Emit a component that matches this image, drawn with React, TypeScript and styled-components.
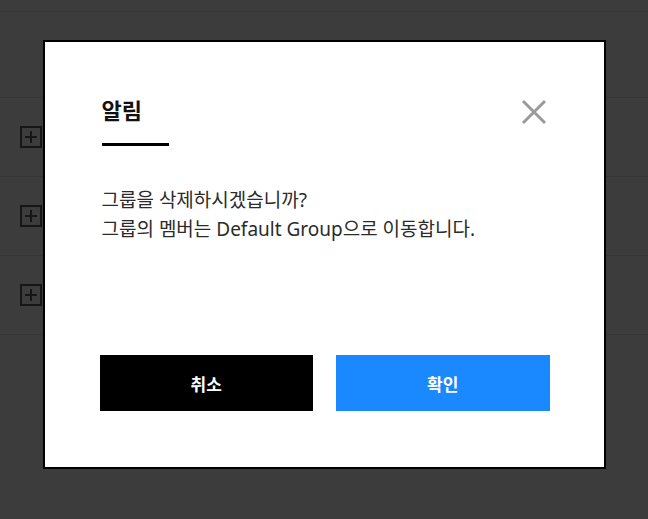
import * as React from 'react';
import styled, { createGlobalStyle } from 'styled-components';

const GlobalStyle = createGlobalStyle`
  html, body {
    margin: 0;
    padding: 0;
    background: #3c3c3c;
    font-family: 'Noto Sans', 'Noto Sans CJK KR', sans-serif;
  }
`;

const Page = styled.div`
  position: relative;
  width: 648px;
  height: 519px;
  overflow: hidden;
  background: #3c3c3c;
`;

const List = styled.div`
  display: flex;
  flex-direction: column;
  padding-top: 11px;
`;

const Header = styled.div`
  height: 85px;
  border-top: 1px solid #353535;
  border-bottom: 1px solid #353535;
`;

const Row = styled.div`
  height: 78px;
  display: flex;
  align-items: center;
  padding-left: 20px;
  border-bottom: 1px solid #353535;
`;

const PlusBox = styled.div`
  width: 22px;
  height: 22px;
  box-sizing: border-box;
  border: 2px solid #161616;
  display: flex;
  align-items: center;
  justify-content: center;
`;

const Overlay = styled.div`
  position: absolute;
  inset: 0;
  display: flex;
  justify-content: center;
  align-items: flex-start;
  padding-top: 40px;
`;

const Modal = styled.div`
  box-sizing: border-box;
  width: 563px;
  height: 429px;
  background: #fff;
  border: 2px solid #000;
  padding: 53px 54px 0 55px;
  display: flex;
  flex-direction: column;
`;

const TitleRow = styled.div`
  display: flex;
  justify-content: space-between;
  align-items: flex-start;
`;

const Title = styled.h2`
  margin: 0;
  padding-left: 2px;
  font-size: 22px;
  line-height: 30px;
  font-weight: 700;
  color: #111;
`;

const CloseButton = styled.button`
  border: none;
  background: none;
  padding: 0;
  margin: 4px 3px 0 0;
  width: 26px;
  height: 26px;
  cursor: pointer;
`;

const Underline = styled.div`
  width: 67px;
  height: 3px;
  background: #000;
  margin: 18px 0 0 2px;
`;

const Message = styled.p`
  margin: 40px 0 0 2px;
  font-size: 19px;
  line-height: 29px;
  color: #2b2b2b;
`;

const Buttons = styled.div`
  margin-top: auto;
  margin-bottom: 56px;
  display: flex;
  gap: 23px;
`;

const ActionButton = styled.button<{ $primary?: boolean }>`
  flex: 1;
  height: 56px;
  border: none;
  background: ${p => (p.$primary ? '#1a88ff' : '#000')};
  color: #fff;
  font-family: 'Noto Sans', 'Noto Sans CJK KR', sans-serif;
  font-size: 17px;
  font-weight: 700;
  cursor: pointer;
`;

const Plus = () => (
  <svg width="14" height="14" viewBox="0 0 14 14">
    <path d="M7 1v12M1 7h12" stroke="#161616" strokeWidth="2" />
  </svg>
);

const App = () => {
  return (
    <Page>
      <GlobalStyle />
      <List>
        <Header />
        {[0, 1, 2].map(i => (
          <Row key={i}>
            <PlusBox>
              <Plus />
            </PlusBox>
          </Row>
        ))}
      </List>
      <Overlay>
        <Modal>
          <TitleRow>
            <Title>알림</Title>
            <CloseButton aria-label="닫기">
              <svg width="26" height="26" viewBox="0 0 26 26">
                <path d="M2 2L24 24M24 2L2 24" stroke="#9a9a9a" strokeWidth="3" />
              </svg>
            </CloseButton>
          </TitleRow>
          <Underline />
          <Message>
            그룹을 삭제하시겠습니까?
            <br />
            그룹의 멤버는 Default Group으로 이동합니다.
          </Message>
          <Buttons>
            <ActionButton>취소</ActionButton>
            <ActionButton $primary>확인</ActionButton>
          </Buttons>
        </Modal>
      </Overlay>
    </Page>
  );
};

export default App;
